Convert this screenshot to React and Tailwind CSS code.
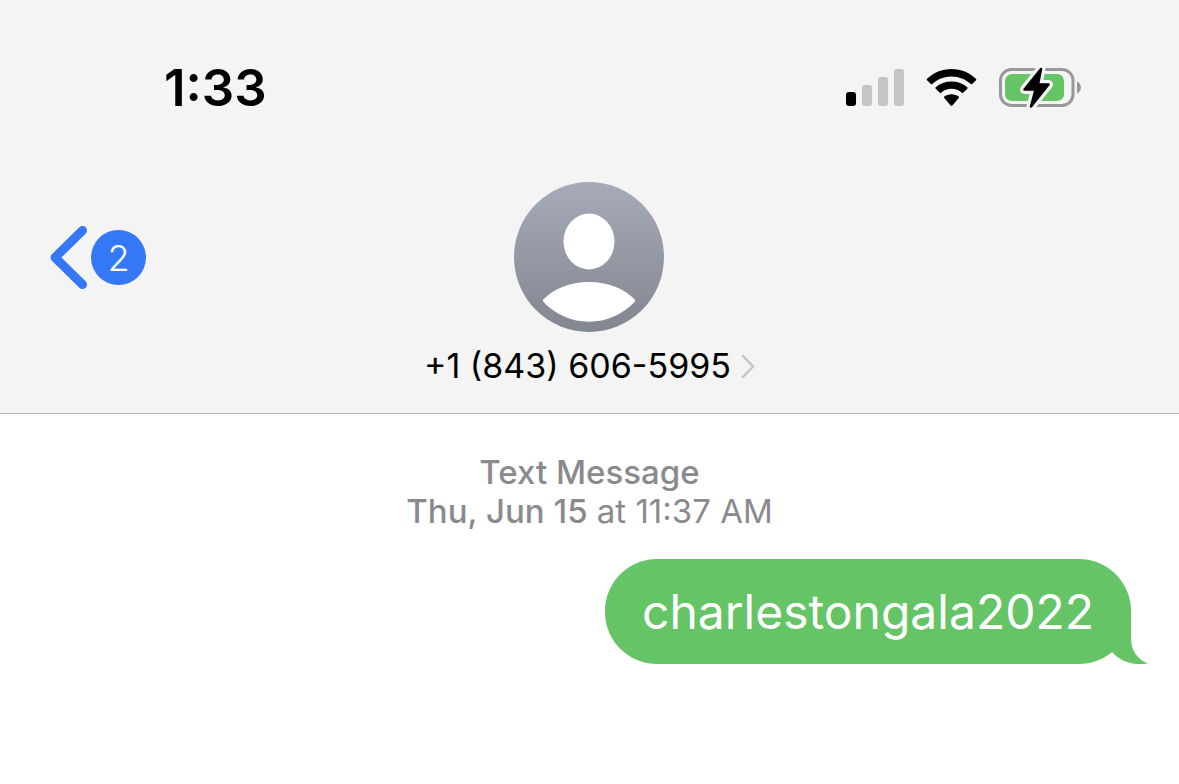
import React from "react";

function StatusBar() {
  return (
    <div className="flex h-14 items-center justify-between pl-[164px] pr-[97px]">
      <time className="pt-0.5 text-[51px] leading-[56px] font-semibold text-black">1:33</time>
      <div className="flex items-center">
        <svg width="58" height="38" viewBox="0 0 58 38" role="img" aria-label="Cellular signal">
          <rect x="0" y="24" width="10" height="14" rx="3" fill="#000" />
          <rect x="16" y="17" width="10" height="21" rx="3" fill="#c5c5c5" />
          <rect x="32" y="9" width="10" height="29" rx="3" fill="#c5c5c5" />
          <rect x="48" y="1" width="10" height="37" rx="3" fill="#c5c5c5" />
        </svg>
        <svg className="ml-[22px]" width="51" height="38" viewBox="0 0 51 38" role="img" aria-label="Wi-Fi">
          <path d="M25.500 8.400C33 8.400 39.700 11.200 44.800 16.100Q45.500 16.700 46.100 16.100L50 12.200Q50.700 11.500 50 10.800C43.600 4.700 34.900 1 25.500 1S7.400 4.700 1 10.800Q.3 11.500 1 12.200L4.900 16.100Q5.500 16.700 6.200 16.100C11.300 11.200 18 8.400 25.500 8.400Z" />
          <path d="M25.500 20.700C29.500 20.700 33.100 22.200 35.900 24.700Q36.600 25.300 37.200 24.700L41.300 20.700Q42 20 41.300 19.300C37.100 15.500 31.600 13.500 25.500 13.500S13.900 15.500 9.700 19.300Q9 20 9.700 20.700L13.800 24.700Q14.400 25.300 15.100 24.700C17.900 22.200 21.500 20.700 25.500 20.700Z" />
          <path d="M25.500 26.300C28.200 26.300 30.700 27.200 32.600 28.600Q33.400 29.300 32.700 30L26.300 37.400Q25.500 38.200 24.700 37.400L18.300 30Q17.600 29.300 18.400 28.600C20.300 27.200 22.800 26.300 25.500 26.300Z" />
        </svg>
        <svg className="ml-[22px]" width="83" height="42" viewBox="0 0 83 42" role="img" aria-label="Battery charging">
          <rect x="1.500" y="3.500" width="72.500" height="36" rx="11" fill="none" stroke="#98989a" strokeWidth="3" />
          <path d="M78 15.500C83.300 17.500 83.300 25.500 78 27.500Z" fill="#98989a" />
          <rect x="6" y="8" width="59" height="27" rx="7" fill="#65c466" />
          <path d="M42 3 25.500 23.500H36.500L32 40.500 49.500 18.500H39Z" fill="#f4f4f5" stroke="#f4f4f5" strokeWidth="9" strokeLinejoin="round" />
          <path d="M42 3 25.500 23.500H36.500L32 40.500 49.500 18.500H39Z" fill="#000" stroke="#000" strokeWidth="2.500" strokeLinejoin="round" />
        </svg>
      </div>
    </div>
  );
}

function Avatar() {
  return (
    <svg width="150" height="150" viewBox="0 0 150 150" aria-hidden="true">
      <defs>
        <linearGradient id="avatar-fill" x1="0" y1="0" x2="0" y2="1">
          <stop offset="0" stopColor="#a6abb9" />
          <stop offset="1" stopColor="#82868f" />
        </linearGradient>
      </defs>
      <circle cx="75" cy="75" r="75" fill="url(#avatar-fill)" />
      <ellipse cx="75" cy="59.500" rx="25.500" ry="28" fill="#fff" />
      <path d="M29.300 117.600Q28.500 118.800 29.500 120C41.500 132.500 57.500 139.700 75 139.700S108.500 132.500 120.500 120Q121.500 118.800 120.700 117.600C110.500 106.500 94 100 75 100S39.500 106.500 29.300 117.600Z" fill="#fff" />
    </svg>
  );
}

function ConversationHeader() {
  return (
    <header className="border-b border-[#b2b2b4] bg-[#f4f4f5] pt-[59px] pb-[27px]">
      <StatusBar />
      <nav className="mt-[67px] grid grid-cols-[1fr_auto_1fr] items-start">
        <button type="button" aria-label="Back, 2 unread" className="mt-[44px] ml-[50px] flex items-center gap-1 justify-self-start">
          <svg width="37" height="63" viewBox="0 0 37 63" aria-hidden="true">
            <path d="M32.500 4.500 5 31.500 32.500 58.500" fill="none" stroke="#3478f6" strokeWidth="9" strokeLinecap="round" strokeLinejoin="round" />
          </svg>
          <span className="flex size-[55px] items-center justify-center rounded-full bg-[#3478f6] text-[36px] leading-none font-light text-white">2</span>
        </button>
        <button type="button" className="flex flex-col items-center">
          <Avatar />
          <span className="mt-[13px] flex items-center gap-[10px] text-[34px] leading-[41px] text-black">
            +1 (843) 606-5995
            <svg width="14" height="24" viewBox="0 0 14 24" aria-hidden="true">
              <path d="M2 2 12 12.500 2 23" fill="none" stroke="#c4c4c6" strokeWidth="2.500" strokeLinecap="round" strokeLinejoin="round" />
            </svg>
          </span>
        </button>
      </nav>
    </header>
  );
}

function SentMessage({ children }) {
  return (
    <p className="relative mr-12 rounded-[52px] bg-[#65c466] px-[37px] py-[22px] text-[48px] leading-[61px] text-white">
      {children}
      <svg className="absolute right-[-17px] bottom-0" width="36" height="53" viewBox="0 0 36 53" aria-hidden="true">
        <path d="M0 0H19V27C19 39 25 48.500 36 52.500C23 54.500 9 51.500 0 41Z" fill="#65c466" />
      </svg>
    </p>
  );
}

export default function App() {
  return (
    <div className="min-h-screen bg-white font-['Inter','Liberation_Sans',sans-serif]">
      <ConversationHeader />
      <main className="flex flex-col pt-[39px]">
        <div className="text-center text-[33px] leading-[39px] text-[#8a8a8e]">
          <h1 className="font-medium">Text Message</h1>
          <p>
            <span className="font-medium">Thu, Jun 15</span> at 11:37 AM
          </p>
        </div>
        <div className="mt-[28px] flex justify-end">
          <SentMessage>charlestongala2022</SentMessage>
        </div>
      </main>
    </div>
  );
}
